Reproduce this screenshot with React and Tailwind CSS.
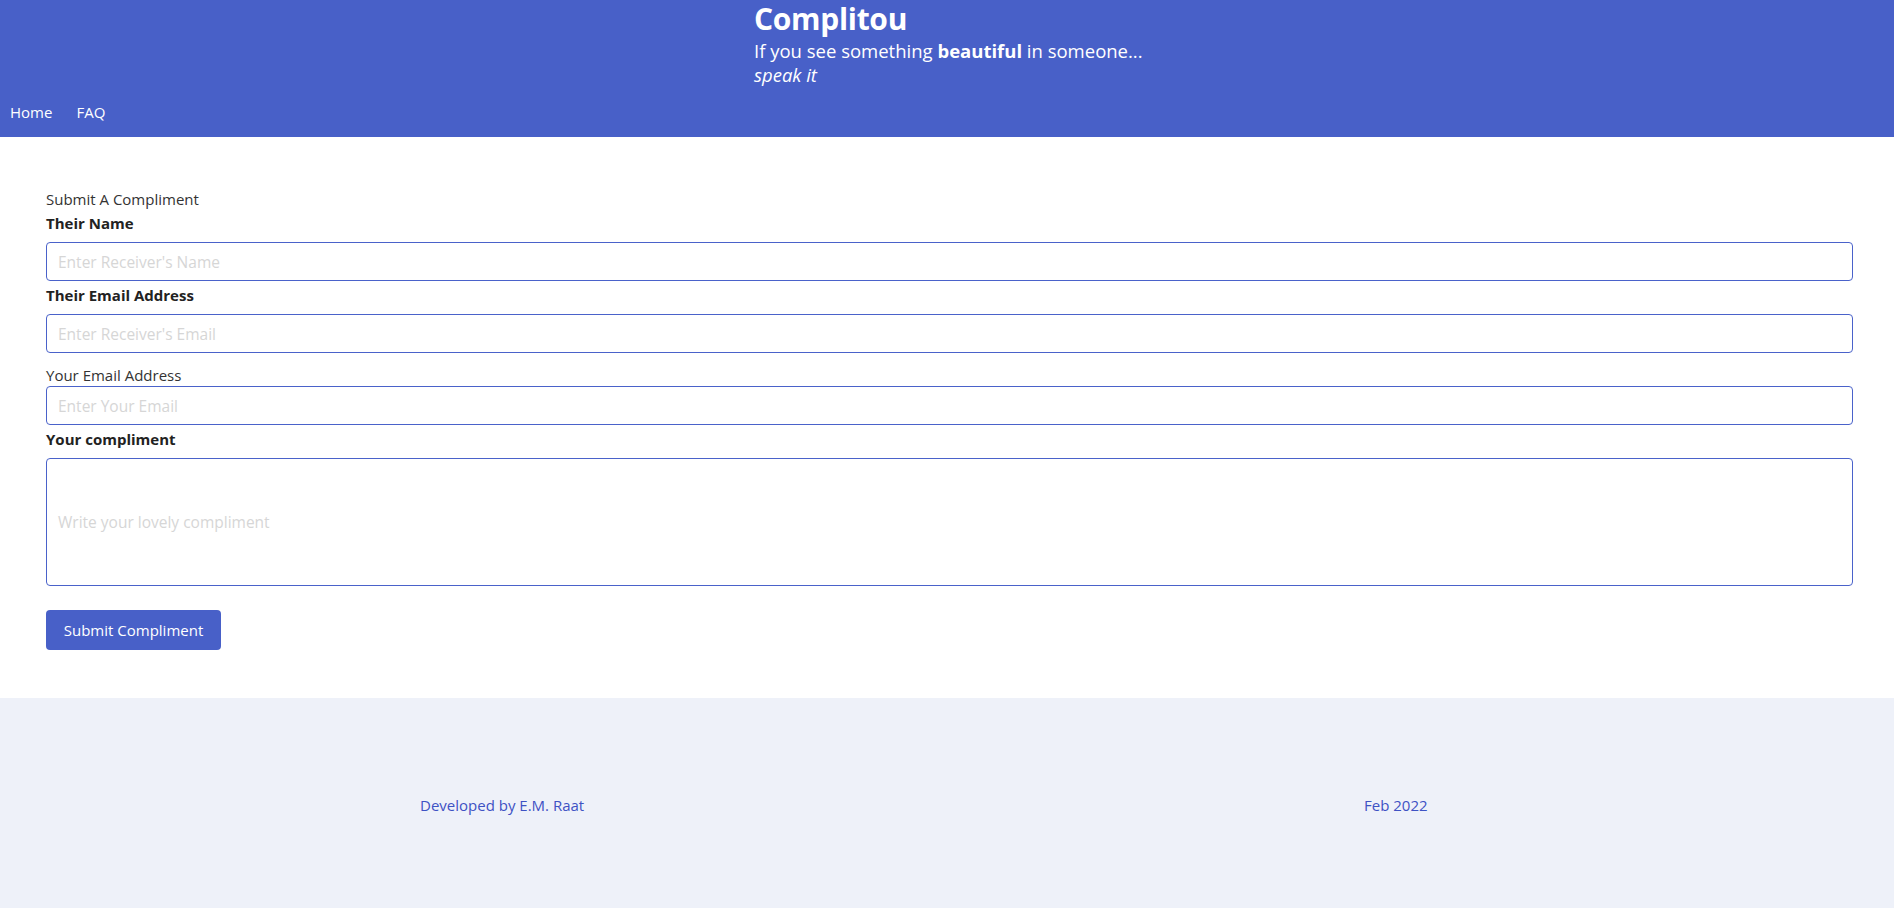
import { useState } from "react"

const font = { fontFamily: '"Open Sans", "Noto Sans", sans-serif' }

const Field = ({ label, bold, children }) => (
  <div className="flex flex-col">
    <label className={`text-[15px] leading-[20px] ${bold ? "font-bold text-[#222]" : "text-[#333]"}`}>{label}</label>
    {children}
  </div>
)

const inputCls =
  "w-full h-[39px] border border-[#4a62ca] rounded-[4px] px-[11px] text-[15.5px] outline-none placeholder:text-[#d6d6d6]"

export default function App() {
  const [form, setForm] = useState({ name: "", email: "", mine: "", text: "" })
  const set = (k) => (e) => setForm({ ...form, [k]: e.target.value })

  return (
    <div className="min-h-screen flex flex-col bg-white" style={font}>
      <header className="bg-[#4860c8] text-white h-[137px] flex flex-col">
        <div className="pl-[754px] pt-[3px]">
          <h1 className="text-[30px] font-bold leading-[32px] tracking-[-0.3px]">Complitou</h1>
          <p className="text-[18.5px] leading-[25px] mt-[3px]">
            If you see something <b>beautiful</b> in someone...
          </p>
          <p className="text-[18.5px] leading-[24px] italic">speak it</p>
        </div>
        <nav className="flex gap-[24px] pl-[10px] mt-[14px] text-[15px]">
          <a href="#">Home</a>
          <a href="#">FAQ</a>
        </nav>
      </header>

      <main className="pl-[46px] pr-[41px] pt-[52px] pb-[48px]">
        <form className="flex flex-col" onSubmit={(e) => e.preventDefault()}>
          <h2 className="text-[15px] text-[#333] leading-[20px] mb-[4px]">Submit A Compliment</h2>
          <Field label="Their Name" bold>
            <input className={`${inputCls} mt-[9px]`} placeholder="Enter Receiver's Name" value={form.name} onChange={set("name")} />
          </Field>
          <div className="mt-[4px]" />
          <Field label="Their Email Address" bold>
            <input className={`${inputCls} mt-[9px]`} placeholder="Enter Receiver's Email" value={form.email} onChange={set("email")} />
          </Field>
          <div className="mt-[12px]" />
          <Field label="Your Email Address">
            <input className={`${inputCls} mt-[1px]`} placeholder="Enter Your Email" value={form.mine} onChange={set("mine")} />
          </Field>
          <div className="mt-[4px]" />
          <Field label="Your compliment" bold>
            <textarea
              className="w-full h-[128px] mt-[9px] border border-[#4a62ca] rounded-[4px] px-[11px] pt-[52px] text-[15.5px] outline-none resize-none placeholder:text-[#d6d6d6]"
              placeholder="Write your lovely compliment"
              value={form.text}
              onChange={set("text")}
            />
          </Field>
          <div>
            <button
              type="submit"
              className="mt-[24px] w-[175px] h-[40px] bg-[#4860c8] text-white text-[15px] rounded-[4px]"
            >
              Submit Compliment
            </button>
          </div>
        </form>
      </main>

      <footer className="bg-[#eef1f9] flex-1 min-h-[211px] flex items-center pt-[4px] text-[#3e52c4] text-[15px]">
        <div className="pl-[420px] w-[1364px]">Developed by E.M. Raat</div>
        <div>Feb 2022</div>
      </footer>
    </div>
  )
}
